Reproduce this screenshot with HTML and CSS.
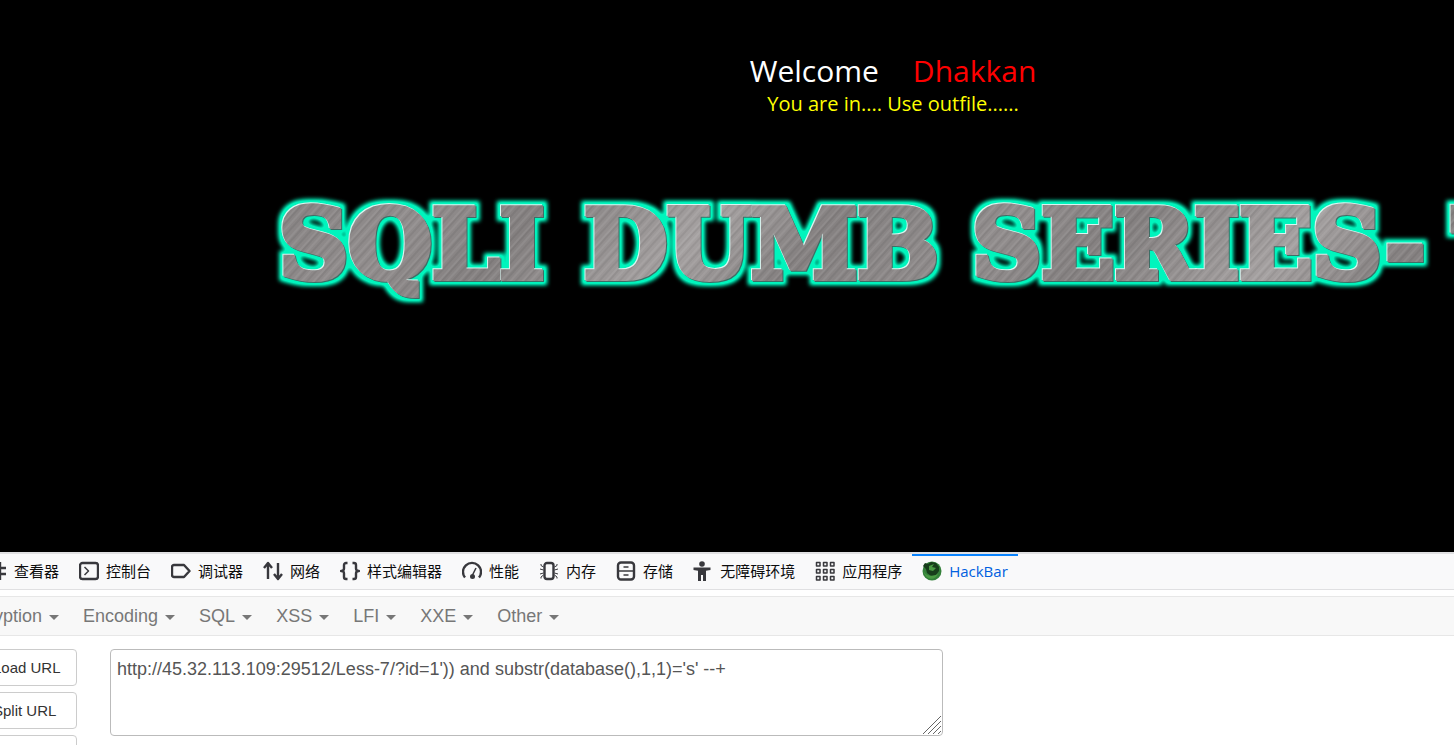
FILE: index.html
```html
<!DOCTYPE html>
<html lang="zh-CN">
<head>
<meta charset="utf-8">
<title>Less-7</title>
<link rel="stylesheet" href="styles.css">
</head>
<body>
<main class="page">
  <div class="welcome">
    <p class="greeting"><span>Welcome</span><span class="name">Dhakkan</span></p>
    <p class="status">You are in.... Use outfile......</p>
  </div>
  <svg class="banner" width="1400" height="130" viewBox="0 0 1400 130" role="img" aria-label="SQLI DUMB SERIES-7">
    <defs>
      <linearGradient id="metal" gradientUnits="userSpaceOnUse" spreadMethod="repeat" x1="0" y1="0" x2="330" y2="300">
        <stop offset="0" stop-color="#858181"/><stop offset=".3" stop-color="#918d8d"/><stop offset=".5" stop-color="#848080"/><stop offset=".8" stop-color="#a5a1a1"/><stop offset="1" stop-color="#858181"/>
      </linearGradient>
      <pattern id="brushed" patternUnits="userSpaceOnUse" width="1400" height="130">
        <rect width="1400" height="130" fill="url(#metal)"/>
        <rect width="1400" height="130" fill="url(#scratches)"/>
      </pattern>
      <pattern id="scratches" patternUnits="userSpaceOnUse" width="31" height="400" patternTransform="rotate(42)">
        <path d="M2 0V400M11 0V400M17 0V400M26 0V400" stroke="#fff" stroke-opacity=".14"/>
        <path d="M6 0V400M13 0V400M21 0V400M29 0V400" stroke="#000" stroke-opacity=".12"/>
      </pattern>
      <filter id="glow" filterUnits="userSpaceOnUse" x="0" y="0" width="1400" height="130" color-interpolation-filters="sRGB">
        <feMorphology in="SourceAlpha" operator="dilate" radius="4" result="wide"/>
        <feGaussianBlur in="wide" stdDeviation="2" result="soft"/>
        <feComponentTransfer in="soft" result="strong"><feFuncA type="linear" slope="1.3"/></feComponentTransfer>
        <feFlood flood-color="#00f5bd"/>
        <feComposite in2="strong" operator="in" result="halo"/>
        <feOffset in="SourceAlpha" dx="-1" dy="-1" result="up"/>
        <feFlood flood-color="#d8f5f0"/>
        <feComposite in2="up" operator="in" result="light"/>
        <feOffset in="SourceAlpha" dx="1" dy="1" result="down"/>
        <feFlood flood-color="#3d6e66"/>
        <feComposite in2="down" operator="in" result="shade"/>
        <feMerge><feMergeNode in="halo"/><feMergeNode in="shade"/><feMergeNode in="light"/><feMergeNode in="SourceGraphic"/></feMerge>
      </filter>
    </defs>
    <g class="banner-text" filter="url(#glow)">
      <text x="14" y="98">SQLI</text>
      <text x="319" y="98">DUMB</text>
      <text x="707" y="98">SERIES-</text>
      <text x="1181" y="98">7</text>
    </g>
  </svg>
</main>

<section class="devtools">
  <nav class="tabs">
    <button class="tab"><svg viewBox="0 0 20 20"><path d="M1 7h18M1 13h18M7 1v18M13 1v18"/></svg>查看器</button>
    <button class="tab"><svg viewBox="0 0 20 20"><rect x="1" y="2" width="18" height="16" rx="2.5"/><path class="thin" d="M5.5 6l4 4-4 4"/></svg>控制台</button>
    <button class="tab"><svg viewBox="0 0 20 20"><path d="M3 4h10l5.5 6-5.500 6H3a2 2 0 0 1-2-2V6a2 2 0 0 1 2-2z"/></svg>调试器</button>
    <button class="tab"><svg viewBox="0 0 20 20"><path d="M5 18V2M1 7l4-5 4 5M15 2v16M11 13l4 5 4-5"/></svg>网络</button>
    <button class="tab"><svg viewBox="0 0 20 20"><path d="M7.500 2H6a2 2 0 0 0-2 2v3.500Q4 10 1 10q3 0 3 2.500V16a2 2 0 0 0 2 2h1.500M12.500 2H14a2 2 0 0 1 2 2v3.500q0 2.500 3 2.500-3 0-3 2.500V16a2 2 0 0 1-2 2h-1.500"/></svg>样式编辑器</button>
    <button class="tab"><svg viewBox="0 0 20 20"><path d="M3 16.500a9 9 0 1 1 14 0"/><path class="thin" d="M10.500 14L14 7"/><circle class="solid" cx="10.500" cy="15.500" r="2.500"/></svg>性能</button>
    <button class="tab"><svg viewBox="0 0 20 20"><rect x="5.500" y="2" width="9" height="16" rx="2.500"/><path class="fine" d="M4.500 6L2 4.500V3M4.500 9L1 8M4.500 12L1 13M4.500 14L2 16v1.500M15.500 6L18 4.500V3M15.500 9L19 8M15.500 12l3.500 1M15.500 14l2.500 2v1.500"/></svg>内存</button>
    <button class="tab"><svg viewBox="0 0 20 20"><rect x="2" y="1.500" width="16" height="17" rx="3"/><path class="thin" d="M3 10h14M7.500 6h5M7.500 14h5"/></svg>存储</button>
    <button class="tab"><svg viewBox="0 0 20 20"><circle class="solid" cx="9" cy="3" r="2.800"/><path class="solid" d="M.5 6.500h17v2.500L13 9.800V20H10v-6H8v6H5V9.800L.5 9z"/></svg>无障碍环境</button>
    <button class="tab"><svg viewBox="0 0 20 20"><path class="thin" d="M1.500 1.500h3.500v3.500H1.500zM8.500 1.500h3.500v3.500H8.500zM15.500 1.500h3.500v3.500h-3.500zM1.500 8.500h3.500v3.500H1.500zM8.500 8.500h3.500v3.500H8.500zM15.500 8.500h3.500v3.500h-3.500zM1.500 15.500h3.500v3.500H1.500zM8.500 15.500h3.500v3.500H8.500zM15.500 15.500h3.500v3.500h-3.500z"/></svg>应用程序</button>
    <button class="tab active"><svg viewBox="0 0 20 20"><circle cx="10" cy="10" r="9.500" fill="#34803a" stroke="none"/><path d="M1 5l2-3 3 1 3-2 5 1 3 4v4l-3 4-5 1-4-3-1-4z" fill="#173d1b" stroke="none"/><path d="M7 5l5-2-2 3 4 1-3 3-4-1zM1 8c1 6 7 9 15 5-3 7-13 7-15-5z" fill="#4a9a43" stroke="none"/></svg><span class="latin">HackBar</span></button>
  </nav>

  <nav class="menu">
    <button class="menu-item">Encryption<i class="caret"></i></button>
    <button class="menu-item">Encoding<i class="caret"></i></button>
    <button class="menu-item">SQL<i class="caret"></i></button>
    <button class="menu-item">XSS<i class="caret"></i></button>
    <button class="menu-item">LFI<i class="caret"></i></button>
    <button class="menu-item">XXE<i class="caret"></i></button>
    <button class="menu-item">Other<i class="caret"></i></button>
  </nav>

  <div class="work">
    <div class="actions">
      <button class="action">Load URL</button>
      <button class="action">Split URL</button>
      <button class="action">Execute</button>
    </div>
    <div class="field">
      <textarea class="url" aria-label="URL" spellcheck="false">http://45.32.113.109:29512/Less-7/?id=1')) and substr(database(),1,1)='s' --+</textarea>
      <svg class="grip" viewBox="0 0 18 18"><path d="M0 18L18 0M5 18L18 5M10 18l8-8M15 18l3-3"/></svg>
    </div>
  </div>
</section>
</body>
</html>
```
FILE: styles.css
```css
* { box-sizing: border-box; }
body {
  margin: 0;
  height: 100vh;
  display: flex;
  flex-direction: column;
  overflow: hidden;
  background: #fff;
}
button { font: inherit; color: inherit; cursor: pointer; }
p { margin: 0; }

.page {
  flex: 1;
  min-height: 0;
  overflow: hidden;
  padding-top: 52px;
  background: #000;
}
.welcome {
  padding-left: 332px;
  text-align: center;
  font-family: "Open Sans", "Noto Sans", sans-serif;
  color: #fff;
}
.greeting {
  display: flex;
  justify-content: center;
  gap: 34px;
  font-size: 30px;
  line-height: 38px;
}
.name { color: #f00; }
.status { font-size: 20px; line-height: 28px; color: #ff0; }
.banner { display: block; margin: 62px 0 0 265px; }
.banner-text {
  font: bold 96px "DejaVu Serif", serif;
  fill: url(#brushed);
  stroke: url(#brushed);
  stroke-width: 6px;
}

.devtools {
  flex: 0 0 193px;
  overflow: hidden;
  font-family: "Liberation Sans", Arial, sans-serif;
}
.tabs {
  display: flex;
  height: 38px;
  margin-left: -23px;
  border-top: 2px solid #e0e0e2;
  border-bottom: 1px solid #e0e0e2;
  background: #f9f9fa;
  font: 15px "Noto Sans CJK SC", sans-serif;
  color: #0c0c0d;
}
.tab {
  flex: none;
  display: flex;
  align-items: center;
  gap: 7px;
  padding: 0 10px 2px;
  border: 0;
  background: none;
}
.tab svg {
  width: 20px;
  height: 20px;
  fill: none;
  stroke: #38383d;
  stroke-width: 2.4;
  stroke-linejoin: round;
}
.tab .thin { stroke-width: 1.5; }
.tab .fine { stroke-width: 1; }
.tab .solid { fill: #38383d; stroke: none; }
.tab.active { color: #0060df; box-shadow: inset 0 2px #0a84ff; }
.latin { font-family: "Open Sans", "Noto Sans", sans-serif; }

.menu {
  display: flex;
  gap: 24px;
  height: 40px;
  margin: 6px 0 0 -43px;
  border: solid #e7e7e7;
  border-width: 1px 0;
  background: #f8f8f8;
  font-size: 18px;
  color: #777;
}
.menu-item {
  display: flex;
  align-items: center;
  gap: 7px;
  padding: 0;
  border: 0;
  background: none;
}
.caret {
  margin-top: 2px;
  border: 5px solid transparent;
  border-top-color: #777;
  border-bottom: 0;
}

.work { display: flex; gap: 33px; padding-top: 13px; }
.actions {
  display: flex;
  flex-direction: column;
  gap: 6px;
  width: 117px;
  margin-left: -40px;
}
.action {
  height: 37px;
  padding: 0 0 0 32px;
  border: 1px solid #ccc;
  border-radius: 4px;
  background: #fff;
  font-size: 15px;
  text-align: left;
  color: #333;
}
.field { flex: 0 1 833px; position: relative; height: 87px; }
.url {
  display: block;
  width: 100%;
  height: 100%;
  padding: 6px;
  border: 1px solid #bbb;
  border-radius: 4px;
  resize: none;
  outline: 0;
  font: 18px/26px "Liberation Sans", Arial, sans-serif;
  color: #555;
}
.grip {
  position: absolute;
  right: 2px;
  bottom: 2px;
  width: 18px;
  height: 18px;
  stroke: #666;
  pointer-events: none;
}
```
